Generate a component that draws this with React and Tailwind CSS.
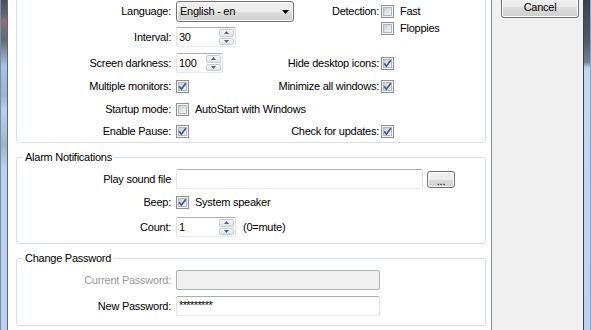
import React from 'react';

const boxBorder = 'border border-[#dbdfe6] border-t-[#abadb3] border-l-[#e2e3ea] border-b-[#e3e9ef] rounded-[2px]';
const winButton =
  'border border-[#707070] rounded-[3px] bg-[linear-gradient(to_bottom,#f2f2f2_0%,#ebebeb_50%,#dddddd_51%,#cfcfcf_100%)] shadow-[inset_0_0_0_1px_#fcfcfc]';

function Check({ checked }) {
  return (
    <div className="relative w-[13px] h-[13px] shrink-0 border border-[#8e8f8f] bg-[#f4f4f4] p-px">
      <div className="w-full h-full border border-[#b3b8bf] bg-gradient-to-br from-[#c9ced5] to-[#f6f6f6]" />
      {checked && (
        <svg width="13" height="13" viewBox="0 0 13 13" className="absolute -left-px -top-px">
          <path d="M3.2 6.4 L5.4 9.2 L9.8 3.2" fill="none" stroke="#3f5b96" strokeWidth="1.7" />
        </svg>
      )}
    </div>
  );
}

function Spinner({ value, width }) {
  return (
    <div className={`flex items-stretch shrink-0 h-[20px] bg-white ${boxBorder} ${width}`}>
      <span className="flex-1 pl-[2px] leading-[18px]">{value}</span>
      <div className="flex flex-col w-[15px] mr-px py-px gap-px">
        <div className="flex-1 flex items-center justify-center border border-[#c5cbd4] rounded-[2px] bg-gradient-to-b from-[#f7f8f9] to-[#dfe3e9]">
          <svg width="5" height="3" viewBox="0 0 5 3">
            <path d="M0 3 L2.5 0 L5 3Z" fill="#4d6185" />
          </svg>
        </div>
        <div className="flex-1 flex items-center justify-center border border-[#c5cbd4] rounded-[2px] bg-gradient-to-b from-[#f7f8f9] to-[#dfe3e9]">
          <svg width="5" height="3" viewBox="0 0 5 3">
            <path d="M0 0 L5 0 L2.5 3Z" fill="#4d6185" />
          </svg>
        </div>
      </div>
    </div>
  );
}

function Label({ children, muted }) {
  return (
    <span className={`w-[154px] shrink-0 text-right mr-[5px] whitespace-nowrap ${muted ? 'text-[#9a9a9a]' : ''}`}>
      {children}
    </span>
  );
}

function RightLabel({ children }) {
  return <span className="w-[109px] shrink-0 text-right mr-[2px] whitespace-nowrap">{children}</span>;
}

function Group({ title, className, children }) {
  return (
    <fieldset className={`w-[470px] min-w-0 m-0 p-0 border border-[#d5dfe5] rounded-[3px] ${className}`}>
      <legend className="ml-[6px] px-[2px] leading-[13px]">{title}</legend>
      {children}
    </fieldset>
  );
}

export default function App() {
  return (
    <div className="w-[591px] h-[330px] overflow-hidden flex bg-[#f0f0f0] text-black text-[11px] leading-[13px] tracking-[-0.25px] font-['Liberation_Sans',Arial,sans-serif]">
      {/* left window frame */}
      <div className="w-[7px] shrink-0 border-l border-[#7b8da5] bg-[linear-gradient(to_bottom,#4a525c_0px,#5d6570_14px,#8a6d72_20px,#646c77_40px,#a6c2e4_66px,#9db6d2_95px,#b7d0ec_110px,#9fb6cf_145px,#b9d2ee_170px,#b9d2ee_100%)]" />
      <div className="w-px shrink-0 bg-[#62666b]" />

      {/* tab page */}
      <div className="w-[483px] shrink-0 bg-white overflow-hidden">
        <div className="mt-[-12px] pl-[8px]">
          <Group title="Settings" className="pb-px">
            <div className="flex">
              <div className="w-[253px] shrink-0 flex flex-col">
                <div className="flex items-center h-[21px]">
                  <Label>Language:</Label>
                  <div className={`flex items-center shrink-0 w-[118px] h-[21px] pl-[3px] pr-[4px] ${winButton}`}>
                    <span className="flex-1">English - en</span>
                    <svg width="7" height="4" viewBox="0 0 7 4">
                      <path d="M0 0 L7 0 L3.5 4Z" fill="#000" />
                    </svg>
                  </div>
                </div>
                <div className="flex items-center h-[20px] mt-[5px]">
                  <Label>Interval:</Label>
                  <Spinner value="30" width="w-[60px]" />
                </div>
                <div className="flex items-center h-[20px] mt-[6px]">
                  <Label>Screen darkness:</Label>
                  <Spinner value="100" width="w-[47px]" />
                </div>
                <div className="flex items-center h-[20px] mt-[3px]">
                  <Label>Multiple monitors:</Label>
                  <Check checked />
                </div>
                <div className="flex items-center h-[20px] mt-[3px]">
                  <Label>Startup mode:</Label>
                  <Check />
                  <span className="ml-[6px] whitespace-nowrap">AutoStart with Windows</span>
                </div>
                <div className="flex items-center h-[20px] mt-[2px]">
                  <Label>Enable Pause:</Label>
                  <Check checked />
                </div>
              </div>

              <div className="flex flex-col">
                <div className="flex items-center h-[21px]">
                  <RightLabel>Detection:</RightLabel>
                  <Check />
                  <span className="ml-[6px]">Fast</span>
                </div>
                <div className="flex items-center h-[13px] pl-[111px]">
                  <Check />
                  <span className="ml-[6px]">Floppies</span>
                </div>
                <div className="flex items-center h-[20px] mt-[18px]">
                  <RightLabel>Hide desktop icons:</RightLabel>
                  <Check checked />
                </div>
                <div className="flex items-center h-[20px] mt-[3px]">
                  <RightLabel>Minimize all windows:</RightLabel>
                  <Check checked />
                </div>
                <div className="flex items-center h-[20px] mt-[25px]">
                  <RightLabel>Check for updates:</RightLabel>
                  <Check checked />
                </div>
              </div>
            </div>
          </Group>

          <Group title="Alarm Notifications" className="mt-[8px] pb-[6px]">
            <div className="flex items-center h-[20px] mt-[5px]">
              <Label>Play sound file</Label>
              <div className={`shrink-0 w-[247px] h-[20px] bg-white ${boxBorder}`} />
              <div className={`shrink-0 ml-[4px] w-[28px] h-[17px] flex items-end justify-center leading-[12px] ${winButton}`}>
                ...
              </div>
            </div>
            <div className="flex items-center h-[20px] mt-[3px]">
              <Label>Beep:</Label>
              <Check checked />
              <span className="ml-[6px]">System speaker</span>
            </div>
            <div className="flex items-center h-[20px] mt-[5px]">
              <Label>Count:</Label>
              <Spinner value="1" width="w-[60px]" />
              <span className="ml-[7px]">(0=mute)</span>
            </div>
          </Group>

          <Group title="Change Password" className="mt-[8px] pb-[9px]">
            <div className="flex items-center h-[20px] mt-[5px]">
              <Label muted>Current Password:</Label>
              <div className="shrink-0 w-[204px] h-[20px] bg-[#f0f0f0] border border-[#adb2b5] rounded-[2px]" />
            </div>
            <div className="flex items-center h-[20px] mt-[6px]">
              <Label>New Password:</Label>
              <div className={`shrink-0 w-[204px] h-[20px] bg-white pl-[2px] leading-[16px] tracking-[-0.6px] ${boxBorder}`}>
                *********
              </div>
            </div>
          </Group>
        </div>
      </div>

      <div className="w-px shrink-0 bg-[#898c95]" />

      {/* button column */}
      <div className="w-[91px] shrink-0 bg-[#f0f0f0] pl-[9px]">
        <div className={`mt-[-5px] w-[78px] h-[23px] flex items-center justify-center pt-[1px] ${winButton}`}>
          Cancel
        </div>
      </div>

      <div className="w-px shrink-0 bg-[#3f4349]" />
      {/* right window frame */}
      <div className="w-[7px] shrink-0 border-r border-[#8ea3bd] bg-[linear-gradient(to_bottom,#3a4450_0px,#4f5a68_40px,#6f8196_62px,#c2d8f1_68px,#bcd3ee_100%)]" />
    </div>
  );
}
